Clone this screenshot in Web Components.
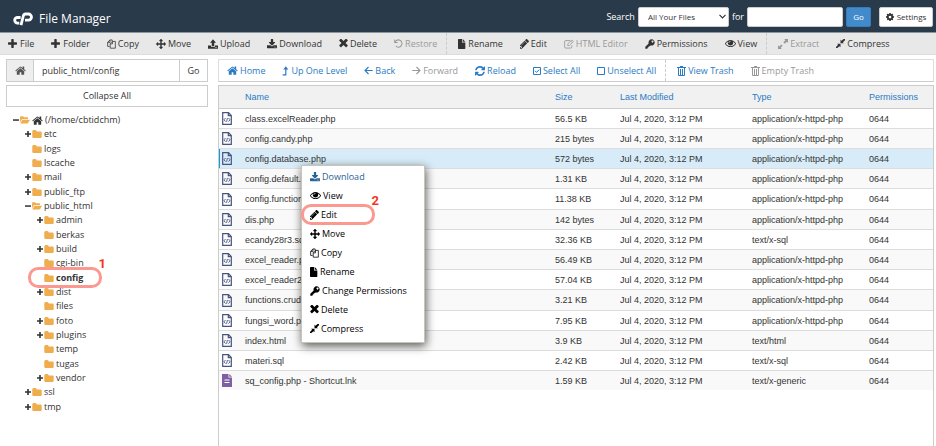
<!DOCTYPE html>
<html lang="en">
<head>
<meta charset="utf-8">
<title>File Manager</title>
<style>
html, body { margin: 0; min-height: 100vh; }
body { background: #fff; color: #333; font: 9px/14px "Open Sans", "Noto Sans", sans-serif; overflow: hidden; }
</style>
</head>
<body>
<fm-app></fm-app>

<template id="app-template">
  <style>
    :host { display: flex; flex-direction: column; min-height: 100vh; position: relative; overflow: hidden; }
    main { flex: 1; display: grid; grid-template-columns: 202px 1fr; gap: 10px; padding: 4px 2px 0 6px; }
    .files { display: flex; flex-direction: column; gap: 3px; min-width: 0; }
    fm-file-table { flex: 1; }
    fm-context-menu { position: absolute; left: 301px; top: 165px; }
    .mark { position: absolute; left: 28px; top: 267px; }
  </style>
  <fm-header>File Manager</fm-header>
  <fm-toolbar label="Actions">
    <fm-action icon="plus">File</fm-action>
    <fm-action icon="plus">Folder</fm-action>
    <fm-action icon="copy">Copy</fm-action>
    <fm-action icon="move">Move</fm-action>
    <fm-action icon="upload">Upload</fm-action>
    <fm-action icon="download">Download</fm-action>
    <fm-action icon="times">Delete</fm-action>
    <fm-action icon="undo" disabled>Restore</fm-action>
    <fm-action icon="file" divided>Rename</fm-action>
    <fm-action icon="pencil">Edit</fm-action>
    <fm-action icon="edit" disabled>HTML Editor</fm-action>
    <fm-action icon="key">Permissions</fm-action>
    <fm-action icon="eye">View</fm-action>
    <fm-action icon="expand" disabled divided>Extract</fm-action>
    <fm-action icon="compress">Compress</fm-action>
  </fm-toolbar>
  <main>
    <fm-sidebar></fm-sidebar>
    <section class="files">
      <fm-toolbar label="Navigation" kind="nav">
        <fm-action icon="home">Home</fm-action>
        <fm-action icon="levelup">Up One Level</fm-action>
        <fm-action icon="left">Back</fm-action>
        <fm-action icon="right" disabled>Forward</fm-action>
        <fm-action icon="refresh">Reload</fm-action>
        <fm-action icon="checked">Select All</fm-action>
        <fm-action icon="square">Unselect All</fm-action>
        <fm-action icon="trash" divided>View Trash</fm-action>
        <fm-action icon="trash" disabled>Empty Trash</fm-action>
      </fm-toolbar>
      <fm-file-table></fm-file-table>
    </section>
  </main>
  <fm-context-menu></fm-context-menu>
  <fm-callout class="mark">1</fm-callout>
</template>

<template id="header-template">
  <style>
    :host { display: flex; align-items: center; justify-content: space-between; height: 32px; background: #293a4a; color: #fff; padding: 0 3px 0 13px; }
    .brand { display: flex; align-items: center; gap: 6px; padding-top: 5px; }
    .brand svg { width: 20px; height: 14px; }
    h1 { margin: 0; font: 12px/16px "Open Sans", sans-serif; }
    form { display: flex; align-items: center; gap: 3px; padding-top: 1px; }
    label { line-height: 18px; }
    .pick { display: grid; width: 91px; margin: 0; }
    .pick > * { grid-area: 1 / 1; }
    .pick svg { width: 7px; height: 5px; justify-self: end; align-self: center; margin-right: 3px; pointer-events: none; }
    select, input, button { font: 8px/14px "Open Sans", sans-serif; box-sizing: border-box; height: 20px; border: 1px solid #ccc; border-radius: 2px; background: #fff; color: #333; margin: 0; }
    select { appearance: none; padding: 0 9px; width: 100%; }
    input { width: 96px; padding: 0 6px; }
    button { display: flex; align-items: center; justify-content: center; gap: 3px; padding: 0 6px; }
    .go { width: 25px; background: #428bca; border-color: #357ebd; color: #fff; }
    .settings { width: 54px; margin-left: 5px; }
  </style>
  <div class="brand">
    <svg viewBox="0 0 20 14" fill="none" stroke="#fff" stroke-width="2.8" stroke-linejoin="round"><path d="M7.6 5.5H4.5a2.8 2.8 0 0 0 0 5.6H6.3M8 13.2L10.3 4Q10.8 2 12.6 2H15.4a3.1 3.1 0 0 1 0 6.2H12"/></svg>
    <h1><slot></slot></h1>
  </div>
  <form onsubmit="return false">
    <label for="scope">Search</label>
    <span class="pick">
      <select id="scope"><option>All Your Files</option></select>
      <svg viewBox="0 0 7 5" fill="none" stroke="#333" stroke-width="1.2"><path d="M.5 .8l3 3 3-3"/></svg>
    </span>
    <label for="query">for</label>
    <input id="query" type="text">
    <button class="go">Go</button>
    <button class="settings" type="button"><fm-icon name="cog"></fm-icon>Settings</button>
  </form>
</template>

<template id="toolbar-template">
  <style>
    :host { display: flex; align-items: center; box-sizing: border-box; height: 23px; background: #e8e8e8; color: #333; border-top: 1px solid #8b959d; border-bottom: 1px solid #ddd; }
    :host([kind=nav]) { background: #fff; color: #2a7bc4; border: 1px solid #ddd; border-bottom-color: #ccc; }
  </style>
  <slot></slot>
</template>

<template id="action-template">
  <style>
    :host { display: flex; align-self: stretch; }
    :host([divided]) { border-left: 1px dashed #ccc; padding-left: 3px; }
    button { display: flex; align-items: center; gap: 2px; margin: 0; padding: 0 9px 0 8px; border: 0; background: none; color: inherit; font: inherit; white-space: nowrap; }
    button:disabled { color: #999; }
  </style>
  <button><fm-icon></fm-icon><slot></slot></button>
</template>

<template id="sidebar-template">
  <style>
    :host { display: flex; flex-direction: column; gap: 3px; min-width: 0; }
    form { display: flex; height: 23px; box-sizing: border-box; border: 1px solid #ccc; }
    button, input { font: inherit; color: #333; background: #fff; border: 0; margin: 0; border-radius: 0; }
    .home { width: 27px; padding: 0; background: #eee; color: #555; border-right: 1px solid #ccc; display: flex; align-items: center; justify-content: center; }
    input { flex: 1; min-width: 0; padding: 0 8px; }
    .go { width: 28px; padding: 0; border-left: 1px solid #ccc; }
    .collapse { height: 22px; border: 1px solid #ccc; }
    fm-tree { margin-top: 3px; }
  </style>
  <form onsubmit="return false">
    <button class="home" type="button" aria-label="Home directory"><fm-icon name="home"></fm-icon></button>
    <input type="text" aria-label="Path" value="public_html/config">
    <button class="go">Go</button>
  </form>
  <button class="collapse">Collapse All</button>
  <fm-tree></fm-tree>
</template>

<template id="tree-template">
  <style>
    :host { display: block; padding-left: 7px; }
    ul { list-style: none; margin: 0; padding: 0; }
    ul ul { padding-left: 12px; }
    .row { display: flex; align-items: center; height: 14px; }
    .row.tall { height: 15px; }
    .toggle { width: 6px; height: 12px; margin: 0 1px 0 0; padding: 0; border: 0; background: none; color: #333; display: flex; align-items: center; flex: none; }
    .folder { color: #f0ad4e; margin-right: 2px; }
    .house { margin-right: 2px; }
    a { color: #333; text-decoration: none; white-space: nowrap; }
    a.current { font-weight: bold; }
  </style>
</template>

<template id="table-template">
  <style>
    :host { display: block; border: 1px solid #ccc; border-bottom: 0; font: 9px/12px "Liberation Sans", Arial, sans-serif; color: #333; }
    table { width: 100%; border-collapse: collapse; table-layout: fixed; }
    th { height: 22px; padding: 0; background: #f1f1f1; color: #2a7bc4; font-weight: normal; text-align: left; border-bottom: 1px solid #ccc; }
    td { height: 19px; padding: 0; border-bottom: 1px solid #ddd; white-space: nowrap; }
    tr:nth-child(5n) td { height: 20px; }
    tbody tr:nth-child(even) { background: #f9f9f9; }
    tbody tr.selected { background: #d7ecf8; box-shadow: inset 1px 0 #179bd7; }
    tbody tr:last-child td { border-bottom: 0; }
    td:first-child { padding-left: 3px; }
    fm-icon { color: #46547f; }
    fm-icon[name=document] { color: #7f5fa3; }
    .i { width: 26px; } .s { width: 65px; } .m { width: 132px; } .t { width: 117px; } .p { width: 64px; }
  </style>
  <table>
    <colgroup><col class="i"><col><col class="s"><col class="m"><col class="t"><col class="p"></colgroup>
    <thead><tr><th></th><th>Name</th><th>Size</th><th>Last Modified</th><th>Type</th><th>Permissions</th></tr></thead>
    <tbody></tbody>
  </table>
</template>

<template id="menu-template">
  <style>
    :host { display: block; width: 124px; box-sizing: border-box; padding: 1px 0 4px; background: #fff; border: 1px solid #c8c5b8; box-shadow: 1px 3px 9px rgba(0,0,0,.65); color: #000; }
    menu { margin: 0; padding: 0; list-style: none; }
    li { position: relative; }
    button { display: flex; align-items: center; gap: 2px; width: 100%; height: 19px; margin: 0; padding: 0 8px; border: 0; background: none; color: inherit; font: inherit; text-align: left; }
    li:first-child { color: #2a6496; }
    fm-callout { position: absolute; left: -1px; top: -1px; }
  </style>
  <menu></menu>
</template>

<template id="callout-template">
  <style>
    :host { display: block; width: 74px; height: 21px; box-sizing: border-box; border: 3px solid #fb9990; border-radius: 10px; color: #f5341c; font: bold 13px/14px Roboto, sans-serif; pointer-events: none; }
    span { position: absolute; right: -7px; top: -13px; }
  </style>
  <span><slot></slot></span>
</template>

<script>
/* Glyphs: [width, height, viewBox, markup] */
const P = d => `<path fill="currentColor" d="${d}"/>`;
const S = (d, w = 1.5) => `<path fill="none" stroke="currentColor" stroke-width="${w}" d="${d}"/>`;
const FOLDER = 'M1728 608v704q0 92-66 158t-158 66h-1216q-92 0-158-66t-66-158v-960q0-92 66-158t158-66h320q92 0 158 66t66 158v32h672q92 0 158 66t66 158z';
const COMPRESS = 'M16 2L12.300 5.700L14 7.400H8V1.400L9.700 3.300L13.600 0H16zM0 14L3.700 10.300L2 8.600H8V14.600L6.300 12.700L2.400 16H0z';
const ICONS = {
  plus: [10, 9, '192 128 1565 1408', P('M1600 736v192q0 40-28 68t-68 28h-416v416q0 40-28 68t-68 28h-192q-40 0-68-28t-28-68v-416h-416q-40 0-68-28t-28-68v-192q0-40 28-68t68-28h416v-416q0-40 28-68t68-28h192q40 0 68 28t28 68v416h416q40 0 68 28t28 68z')],
  minus: [6, 6, '0 0 6 6', P('M0 2.300h6v1.500H0z')],
  smallplus: [6, 6, '0 0 6 6', P('M0 2.300h2.200V0h1.600v2.300H6v1.500H3.800V6H2.200V3.800H0z')],
  copy: [9, 10, '0 0 14 15', S('M4 11.300H1V5L4.500 1.200H8V3M4.500 1.200V5H1M5 14V7L8 3.500h5V14zM8.500 3.500V7.300H5', 1.2)],
  move: [10, 10, '0 0 1792 1792', P('M1792 896q0 26-19 45l-256 256q-19 19-45 19t-45-19-19-45v-128h-384v384h128q26 0 45 19t19 45-19 45l-256 256q-19 19-45 19t-45-19l-256-256q-19-19-19-45t19-45 45-19h128v-384h-384v128q0 26-19 45t-45 19-45-19l-256-256q-19-19-19-45t19-45l256-256q19-19 45-19t45 19 19 45v128h384v-384h-128q-26 0-45-19t-19-45 19-45l256-256q19-19 45-19t45 19l256 256q19 19 19 45t-19 45-45 19h-128v384h384v-128q0-26 19-45t45-19 45 19l256 256q19 19 19 45z')],
  upload: [10, 10, '0 0 16 16', P('M8 .5L12.800 5.800H10V11H6V5.800H3.200zM0 10.500H4.800V12.300H11.200V10.500H16V15.500H0zM11 13.300v1h1.200v-1zM13.300 13.300v1h1.200v-1z')],
  download: [10, 10, '64 0 1664 1664', P('M1344 1344q0-26-19-45t-45-19-45 19-19 45 19 45 45 19 45-19 19-45zm256 0q0-26-19-45t-45-19-45 19-19 45 19 45 45 19 45-19 19-45zm128-224v320q0 40-28 68t-68 28h-1472q-40 0-68-28t-28-68v-320q0-40 28-68t68-28h465l135 136q58 56 136 56t136-56l136-136h464q40 0 68 28t28 68zm-325-569q17 41-14 70l-448 448q-18 19-45 19t-45-19l-448-448q-31-29-14-70 17-39 59-39h256v-448q0-26 19-45t45-19h256q26 0 45 19t19 45v448h256q42 0 59 39z')],
  times: [9, 9, '280 400 1232 1256', P('M1490 1322q0 40-28 68l-136 136q-28 28-68 28t-68-28l-294-294-294 294q-28 28-68 28t-68-28l-136-136q-28-28-28-68t28-68l294-294-294-294q-28-28-28-68t28-68l136-136q28-28 68-28t68 28l294 294 294-294q28-28 68-28t68 28l136 136q28 28 28 68t-28 68l-294 294 294 294q28 28 28 68z')],
  undo: [9, 9, '0 0 16 16', S('M1.200 1V6.200H6.500M1.500 6A6.500 6.500 0 1 1 3.200 12.800', 1.8)],
  file: [8, 10, '0 0 12 15', P('M0 1Q0 0 1 0H6V5.200H11V14Q11 15 10 15H1Q0 15 0 14zM7 0L11 4.200H7z')],
  pencil: [9, 10, '256 200 1400 1464', P('M491 1536l91-91-235-235-91 91v107h128v128h107zm523-928q0-22-22-22-10 0-17 7l-542 542q-7 7-7 17 0 22 22 22 10 0 17-7l542-542q7-7 7-17zm-54-192l416 416-832 832h-416v-416zm683 96q0 53-37 90l-166 166-416-416 166-165q36-38 90-38 53 0 91 38l235 234q37 39 37 91z')],
  edit: [10, 10, '0 0 16 16', S('M10 2.500H3Q1 2.500 1 4.500V12.500Q1 14.500 3 14.500H10.500Q12.500 14.500 12.500 12.500V10', 1.4) + S('M6 10.500V8L12.500 1.500L15 4L8.500 10.500zM10.700 3.300L13.200 5.800', 1.3)],
  key: [10, 10, '0 0 16 16', P('M10.500 .5A5 5 0 1 1 8.800 10.200L7.500 11.500H6V13H4.500V14.500L3.500 15.500H.5V12.500L5.900 7.100A5 5 0 0 1 10.500 .5zM12 2.500A1.500 1.500 0 1 0 12.100 2.500z')],
  eye: [11, 9, '0 300 1792 1300', P('M1664 960q-152-236-381-353 61 104 61 225 0 185-131.500 316.500t-316.500 131.500-316.500-131.500-131.500-316.500q0-121 61-225-229 117-381 353 133 205 333.500 326.500t434.500 121.500 434.500-121.500 333.500-326.500zm-720-384q0-20-14-34t-34-14q-125 0-214.500 89.500t-89.500 214.500q0 20 14 34t34 14 34-14 14-34q0-86 61-147t147-61q20 0 34-14t14-34zm848 384q0 34-20 69-140 230-376.500 368.500t-499.500 138.500-499.500-139-376.500-368q-20-35-20-69t20-69q140-229 376.500-368t499.500-139 499.500 139 376.500 368q20 35 20 69z')],
  expand: [10, 10, '0 0 16 16', P('M16 0V6.200L14 4.200L10.800 7.400L8.600 5.200L11.800 2L9.800 0zM0 16V9.800L2 11.800L5.200 8.600L7.400 10.800L4.200 14L6.200 16z')],
  compress: [9, 9, '0 0 16 16', P(COMPRESS)],
  home: [11, 9, '64 180 1664 1400', P('M1472 992v480q0 26-19 45t-45 19h-384v-384h-256v384h-384q-26 0-45-19t-19-45v-480q0-1 .5-3t.5-3l575-474 575 474q1 2 1 6zm223-69l-62 74q-8 9-21 11h-3q-13 0-21-7l-692-577-692 577q-12 8-24 7-13-2-21-11l-62-74q-8-10-7-23.500t11-21.500l719-599q32-26 76-26t76 26l244 204v-195q0-14 9-23t23-9h192q14 0 23 9t9 23v408l219 182q10 8 11 21.500t-7 23.500z')],
  levelup: [7, 10, '0 0 11 16', S('M1 14.300H6V4', 1.900) + P('M6 .3L10 5.500H2z')],
  left: [9, 9, '0 0 16 16', S('M15.500 8H2M8 1.800L1.800 8L8 14.200', 2)],
  right: [9, 9, '0 0 16 16', S('M.5 8H14M8 1.800L14.200 8L8 14.200', 2)],
  refresh: [10, 10, '128 128 1536 1536', P('M1639 1056q0 5-1 7-64 268-268 434.500t-478 166.500q-146 0-282.500-55t-243.500-157l-129 129q-19 19-45 19t-45-19-19-45v-448q0-26 19-45t45-19h448q26 0 45 19t19 45-19 45l-137 137q71 66 161 102t187 36q134 0 250-65t186-179q11-17 53-117 8-23 30-23h192q13 0 22.500 9.500t9.500 22.500zm25-800v448q0 26-19 45t-45 19h-448q-26 0-45-19t-19-45 19-45l138-138q-148-137-349-137-134 0-250 65t-186 179q-11 17-53 117-8 23-30 23h-199q-13 0-22.500-9.500t-9.500-22.500v-7q65-268 270-434.500t480-166.500q146 0 284 55.500t245 156.500l130-129q19-19 45-19t45 19 19 45z')],
  checked: [8, 8, '0 0 8 8', S('M.5 .5h7v7h-7z', 1) + S('M2 3.800l1.600 1.600L6.200 2.600', 1)],
  square: [8, 8, '0 0 8 8', S('M.5 .5h7v7h-7z', 1)],
  trash: [9, 10, '0 0 9 10', S('M0 1.500H9M3 .5H6M1.500 1.500V9.500H7.500V1.500M3.500 3V9M5.500 3V9', 1)],
  cog: [8, 8, '128 128 1536 1536', P('M1152 896q0-106-75-181t-181-75-181 75-75 181 75 181 181 75 181-75 75-181zm512-109v222q0 12-8 23t-20 13l-185 28q-19 54-39 91 35 50 107 138 10 12 10 25t-9 23q-27 37-99 108t-94 71q-12 0-26-9l-138-108q-44 23-91 38-16 136-29 186-7 28-36 28h-222q-14 0-24.500-8.500t-11.500-21.500l-28-184q-49-16-90-37l-141 107q-10 9-25 9-14 0-25-11-126-114-165-168-7-10-7-23 0-12 8-23 15-21 51-66.500t54-70.500q-27-50-41-99l-183-27q-13-2-21-12.500t-8-23.500v-222q0-12 8-23t19-13l186-28q14-46 39-92-40-57-107-138-10-12-10-24 0-10 9-23 26-36 98.500-107.500t94.500-71.500q13 0 26 10l138 107q44-23 91-38 16-136 29-186 7-28 36-28h222q14 0 24.500 8.500t11.500 21.500l28 184q49 16 90 37l142-107q9-9 24-9 13 0 25 10 129 119 165 170 7 8 7 22 0 12-8 23-15 21-51 66.500t-54 70.500q26 50 41 98l183 28q13 2 21 12.500t8 23.500z')],
  folder: [10, 8, '64 128 1664 1408', P(FOLDER)],
  folderopen: [10, 8, '0 0 16 13', P('M0 10.500V1.500Q0 .5 1 .5H5L6.500 2H12Q13 2 13 3V4.800H4.500Q3.500 4.800 2.800 5.700zM4.500 6H15.500Q16.300 6 15.700 7L13 11.500Q12.500 12.300 11.500 12.300H1Q.2 12.300 .8 11.300L3.300 6.800Q3.700 6 4.500 6z')],
  code: [10, 13, '0 0 10 13', S('M.7 .7H6.500L9.300 3.500V12.300H.7zM6.300 .7V3.700H9.300', 1.200) + S('M3.500 6L2 7.800L3.500 9.600M6.500 6L8 7.800L6.500 9.600M5.400 6L4.600 9.800', .9)],
  document: [10, 13, '0 0 10 13', P('M0 0H6.500V3.500H10V13H0zM7.300 0L10 2.700H7.300z') + '<path stroke="#fff" stroke-width="1" d="M2.500 6H7.500M2.500 8.500H7.500"/>']
};

class Base extends HTMLElement {
  constructor() {
    super();
    const root = this.attachShadow({ mode: 'open' });
    const id = this.constructor.template;
    if (id) root.append(document.getElementById(id).content.cloneNode(true));
  }
}
const simple = (tag, id) => customElements.define(tag, class extends Base { static template = id; });

customElements.define('fm-icon', class extends Base {
  static observedAttributes = ['name'];
  attributeChangedCallback() {
    const icon = ICONS[this.getAttribute('name')];
    if (!icon) return;
    const [w, h, box, body] = icon;
    this.shadowRoot.innerHTML = `<style>:host{display:inline-flex;flex:none;vertical-align:middle}svg{display:block}</style>
      <svg width="${w}" height="${h}" viewBox="${box}" aria-hidden="true">${body}</svg>`;
  }
});

customElements.define('fm-action', class extends Base {
  static template = 'action-template';
  connectedCallback() {
    this.shadowRoot.querySelector('fm-icon').setAttribute('name', this.getAttribute('icon'));
    this.shadowRoot.querySelector('button').disabled = this.hasAttribute('disabled');
  }
});

customElements.define('fm-toolbar', class extends Base {
  static template = 'toolbar-template';
  connectedCallback() {
    this.setAttribute('role', 'toolbar');
    this.setAttribute('aria-label', this.getAttribute('label'));
  }
});

const TREE = { name: '(/home/cbtidchm)', home: true, open: true, children: [
  { name: 'etc', more: true }, { name: 'logs' }, { name: 'lscache' }, { name: 'mail', more: true }, { name: 'public_ftp', more: true },
  { name: 'public_html', open: true, children: [
    { name: 'admin', more: true }, { name: 'berkas' }, { name: 'build', more: true }, { name: 'cgi-bin' }, { name: 'config', current: true },
    { name: 'dist', more: true }, { name: 'files' }, { name: 'foto', more: true }, { name: 'plugins', more: true }, { name: 'temp' }, { name: 'tugas' }, { name: 'vendor', more: true }
  ] },
  { name: 'ssl', more: true }, { name: 'tmp', more: true }
] };

customElements.define('fm-tree', class extends Base {
  static template = 'tree-template';
  connectedCallback() {
    let n = 0;
    const node = item => {
      const tall = ++n % 3 === 0 ? ' tall' : '';
      const sign = item.open ? 'minus' : 'smallplus';
      const toggle = item.open || item.more
        ? `<button class="toggle" aria-label="Toggle ${item.name}"><fm-icon name="${sign}"></fm-icon></button>`
        : '<span class="toggle"></span>';
      return `<li><div class="row${tall}">${toggle}<fm-icon class="folder" name="${item.open ? 'folderopen' : 'folder'}"></fm-icon>` +
        (item.home ? '<fm-icon class="house" name="home"></fm-icon>' : '') +
        `<a href="#" class="${item.current ? 'current' : ''}">${item.name}</a></div>` +
        (item.children ? `<ul>${item.children.map(node).join('')}</ul>` : '') + '</li>';
    };
    this.shadowRoot.append(document.createRange().createContextualFragment(`<ul>${node(TREE)}</ul>`));
  }
});

const PHP = 'application/x-httpd-php';
const FILES = [
  ['class.excelReader.php', '56.5 KB', PHP], ['config.candy.php', '215 bytes', PHP], ['config.database.php', '572 bytes', PHP],
  ['config.default.php', '1.31 KB', PHP], ['config.function.php', '11.38 KB', PHP], ['dis.php', '142 bytes', PHP],
  ['ecandy28r3.sql', '32.36 KB', 'text/x-sql'], ['excel_reader.php', '56.49 KB', PHP], ['excel_reader2.php', '57.04 KB', PHP],
  ['functions.crud.php', '3.21 KB', PHP], ['fungsi_word.php', '7.95 KB', PHP], ['index.html', '3.9 KB', 'text/html'],
  ['materi.sql', '2.42 KB', 'text/x-sql'], ['sq_config.php - Shortcut.lnk', '1.59 KB', 'text/x-generic']
];
customElements.define('fm-file-table', class extends Base {
  static template = 'table-template';
  connectedCallback() {
    this.shadowRoot.querySelector('tbody').innerHTML = FILES.map(([name, size, type], i) =>
      `<tr class="${i === 2 ? 'selected' : ''}"><td><fm-icon name="${type === 'text/x-generic' ? 'document' : 'code'}"></fm-icon></td>` +
      `<td>${name}</td><td>${size}</td><td>Jul 4, 2020, 3:12 PM</td><td>${type}</td><td>0644</td></tr>`).join('');
  }
});

const MENU = [['download', 'Download'], ['eye', 'View'], ['pencil', 'Edit'], ['move', 'Move'], ['copy', 'Copy'], ['file', 'Rename'],
  ['key', 'Change Permissions'], ['times', 'Delete'], ['compress', 'Compress']];
customElements.define('fm-context-menu', class extends Base {
  static template = 'menu-template';
  connectedCallback() {
    this.shadowRoot.querySelector('menu').innerHTML = MENU.map(([icon, text]) =>
      `<li><button><fm-icon name="${icon}"></fm-icon>${text}</button>${text === 'Edit' ? '<fm-callout>2</fm-callout>' : ''}</li>`).join('');
  }
});

simple('fm-callout', 'callout-template');
simple('fm-header', 'header-template');
simple('fm-sidebar', 'sidebar-template');
simple('fm-app', 'app-template');
</script>
</body>
</html>
